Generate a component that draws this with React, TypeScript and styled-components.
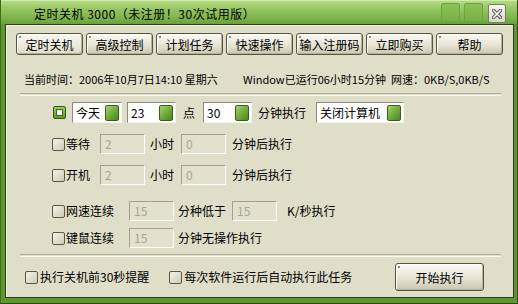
import styled, { createGlobalStyle } from "styled-components";

const GlobalStyle = createGlobalStyle`
  html, body {
    margin: 0;
    padding: 0;
    background: #ffffff;
  }
  body {
    font-family: "Noto Sans CJK SC", "Liberation Sans", sans-serif;
    font-size: 12px;
    color: #000;
  }
`;

const Window = styled.div`
  width: 518px;
  height: 304px;
  box-sizing: border-box;
  display: flex;
  flex-direction: column;
  background: #5f9630;
  border-left: 1px solid #3f6a1c;
  border-right: 1px solid #2e4f14;
  border-bottom: 1px solid #2e4f14;
  padding: 0 3px 5px 4px;
`;

const TitleBar = styled.div`
  height: 24px;
  margin: 0 -3px 0 -4px;
  display: flex;
  align-items: center;
  background: linear-gradient(180deg, #b4da82 0%, #96c662 35%, #7db34a 75%, #6aa03a 100%);
  border-top: 1px solid #d2ecb0;
  box-sizing: border-box;
`;

const Title = styled.div`
  padding-left: 33px;
  padding-top: 1px;
  font-size: 12px;
  letter-spacing: 0.5px;
  color: #000;
  white-space: nowrap;
`;

const TitleControls = styled.div`
  margin-left: auto;
  margin-right: 11px;
  display: flex;
  gap: 4px;
  align-items: center;
`;

const GreenSquare = styled.div`
  width: 19px;
  height: 19px;
  box-sizing: border-box;
  border: 1px solid #6fa540;
  border-radius: 2px;
  background: linear-gradient(180deg, #8dc158 0%, #78b044 100%);
`;

const CloseButton = styled.div`
  width: 18px;
  height: 19px;
  margin-left: 1px;
  margin-top: 2px;
  box-sizing: border-box;
  border: 1px solid #7a7a6a;
  border-radius: 2px;
  background: linear-gradient(180deg, #f6f6f0 0%, #d8d8cc 100%);
  display: flex;
  align-items: center;
  justify-content: center;
`;

const Body = styled.div`
  flex: 1;
  display: flex;
  flex-direction: column;
  background: #dfdec8;
  border: 1px solid #2f3a22;
  box-shadow: inset 1px 1px 0 #f4f3e6;
  padding-top: 8px;
`;

const Tabs = styled.div`
  display: flex;
  gap: 3px;
  padding-left: 10px;
`;

const Button = styled.button<{ $width: number; $height?: number; $active?: boolean }>`
  position: relative;
  width: ${(p) => p.$width}px;
  height: ${(p) => p.$height ?? 22}px;
  padding: 0;
  font-family: inherit;
  font-size: 12px;
  color: #000;
  border: 1px solid #55543f;
  border-radius: 3px;
  background: ${(p) =>
    p.$active
      ? "linear-gradient(180deg, #f7f6ee 0%, #ebeadc 55%, #dcdac6 100%)"
      : "linear-gradient(180deg, #fbfaf4 0%, #e6e4d4 55%, #c9c7b0 100%)"};
  box-shadow: inset 1px 1px 0 #ffffff, inset -1px -1px 0 #b5b39c;
  &::before {
    content: "";
    position: absolute;
    left: 2px;
    top: 2px;
    width: 2px;
    height: 2px;
    background: #8a8a78;
  }
`;

const Status = styled.div`
  margin-top: 16px;
  padding-left: 18px;
  height: 16px;
  line-height: 16px;
  font-size: 11px;
  display: flex;
  white-space: nowrap;
`;

const StatusPart = styled.span<{ $width?: number }>`
  width: ${(p) => (p.$width ? `${p.$width}px` : "auto")};
  flex-shrink: 0;
`;

const Divider = styled.div<{ $top: number }>`
  margin: ${(p) => p.$top}px 12px 0 14px;
  height: 1px;
  border-top: 1px solid #aeac96;
  border-bottom: 1px solid #fbfaf0;
`;

const Row = styled.div<{ $top: number; $left: number; $height?: number }>`
  margin-top: ${(p) => p.$top}px;
  padding-left: ${(p) => p.$left}px;
  height: ${(p) => p.$height ?? 20}px;
  display: flex;
  align-items: center;
  white-space: nowrap;
`;

const Check = styled.span<{ $on?: boolean; $ml?: number }>`
  margin-left: ${(p) => p.$ml ?? 0}px;
  width: 13px;
  height: 13px;
  box-sizing: border-box;
  flex-shrink: 0;
  border: 1px solid ${(p) => (p.$on ? "#2f5a14" : "#5a5948")};
  border-radius: 2px;
  background: ${(p) =>
    p.$on
      ? "linear-gradient(180deg, #9ad160 0%, #5d9a2a 100%)"
      : "linear-gradient(135deg, #f2f1e6 0%, #cfcdb8 100%)"};
  display: flex;
  align-items: center;
  justify-content: center;
  &::after {
    content: "";
    display: ${(p) => (p.$on ? "block" : "none")};
    width: 5px;
    height: 5px;
    background: #fff;
    border: 1px solid #3a6a1a;
  }
`;

const Text = styled.span<{ $ml?: number }>`
  margin-left: ${(p) => p.$ml ?? 0}px;
  line-height: 16px;
`;

const Combo = styled.div<{ $width: number; $ml: number }>`
  margin-left: ${(p) => p.$ml}px;
  width: ${(p) => p.$width}px;
  height: 21px;
  box-sizing: border-box;
  background: #fff;
  border: 1px solid;
  border-color: #8c8b78 #f4f3ea #f4f3ea #8c8b78;
  display: flex;
  align-items: center;
  padding: 0 2px 0 3px;
`;

const ComboText = styled.span`
  flex: 1;
  line-height: 16px;
`;

const ComboArrow = styled.span`
  width: 14px;
  height: 16px;
  box-sizing: border-box;
  border: 1px solid #35601a;
  border-radius: 2px;
  background: linear-gradient(135deg, #a4d66c 0%, #72ad3c 50%, #4c8424 100%);
`;

const Field = styled.div<{ $ml: number }>`
  margin-left: ${(p) => p.$ml}px;
  width: 45px;
  height: 20px;
  box-sizing: border-box;
  border: 1px solid;
  border-color: #a3a18c #ffffff #ffffff #a3a18c;
  background: #e2e1cd;
  color: #a6a595;
  padding-left: 4px;
  line-height: 18px;
`;

const BottomRow = styled.div`
  margin-top: 6px;
  padding-left: 19px;
  height: 28px;
  display: flex;
  align-items: center;
  white-space: nowrap;
`;

const StartButton = styled(Button)`
  margin-left: auto;
  margin-right: 29px;
`;

const CloseIcon = () => (
  <svg width="10" height="10" viewBox="0 0 10 10">
    <path d="M1.5 1.5 L8.5 8.5 M8.5 1.5 L1.5 8.5" stroke="#3c3c34" strokeWidth="3.2" strokeLinecap="square" />
    <path d="M1.5 1.5 L8.5 8.5 M8.5 1.5 L1.5 8.5" stroke="#ffffff" strokeWidth="1.6" strokeLinecap="square" />
  </svg>
);

const tabs = ["定时关机", "高级控制", "计划任务", "快速操作", "输入注册码", "立即购买", "帮助"];

const App = () => {
  return (
    <>
      <GlobalStyle />
      <Window>
        <TitleBar>
          <Title>定时关机 3000（未注册！30次试用版）</Title>
          <TitleControls>
            <GreenSquare />
            <GreenSquare />
            <CloseButton>
              <CloseIcon />
            </CloseButton>
          </TitleControls>
        </TitleBar>
        <Body>
          <Tabs>
            {tabs.map((t, i) => (
              <Button key={t} $width={67} $active={i === 0}>
                {t}
              </Button>
            ))}
          </Tabs>

          <Status>
            <StatusPart $width={219}>当前时间：2006年10月7日14:10 星期六</StatusPart>
            <StatusPart>Window已运行06小时15分钟&nbsp;&nbsp;网速：0KB/S,0KB/S</StatusPart>
          </Status>

          <Divider $top={6} />

          <Row $top={6} $left={47} $height={21}>
            <Check $on />
            <Combo $width={50} $ml={6}>
              <ComboText>今天</ComboText>
              <ComboArrow />
            </Combo>
            <Combo $width={49} $ml={5}>
              <ComboText>23</ComboText>
              <ComboArrow />
            </Combo>
            <Text $ml={7}>点</Text>
            <Combo $width={49} $ml={8}>
              <ComboText>30</ComboText>
              <ComboArrow />
            </Combo>
            <Text $ml={6}>分钟执行</Text>
            <Combo $width={88} $ml={10}>
              <ComboText>关闭计算机</ComboText>
              <ComboArrow />
            </Combo>
          </Row>

          <Row $top={11} $left={46}>
            <Check />
            <Text $ml={1}>等待</Text>
            <Field $ml={10}>2</Field>
            <Text $ml={5}>小时</Text>
            <Field $ml={7}>0</Field>
            <Text $ml={6}>分钟后执行</Text>
          </Row>

          <Row $top={11} $left={46}>
            <Check />
            <Text $ml={1}>开机</Text>
            <Field $ml={10}>2</Field>
            <Text $ml={5}>小时</Text>
            <Field $ml={7}>0</Field>
            <Text $ml={6}>分钟后执行</Text>
          </Row>

          <Row $top={16} $left={46}>
            <Check />
            <Text $ml={1}>网速连续</Text>
            <Field $ml={15}>15</Field>
            <Text $ml={4}>分种低于</Text>
            <Field $ml={6}>15</Field>
            <Text $ml={10}>K/秒执行</Text>
          </Row>

          <Row $top={7} $left={46}>
            <Check />
            <Text $ml={1}>键鼠连续</Text>
            <Field $ml={15}>15</Field>
            <Text $ml={4}>分钟无操作执行</Text>
          </Row>

          <Divider $top={6} />

          <BottomRow>
            <Check />
            <Text $ml={2}>执行关机前30秒提醒</Text>
            <Check $ml={20} />
            <Text $ml={2}>每次软件运行后自动执行此任务</Text>
            <StartButton $width={89} $height={28}>
              开始执行
            </StartButton>
          </BottomRow>
        </Body>
      </Window>
    </>
  );
};

export default App;
